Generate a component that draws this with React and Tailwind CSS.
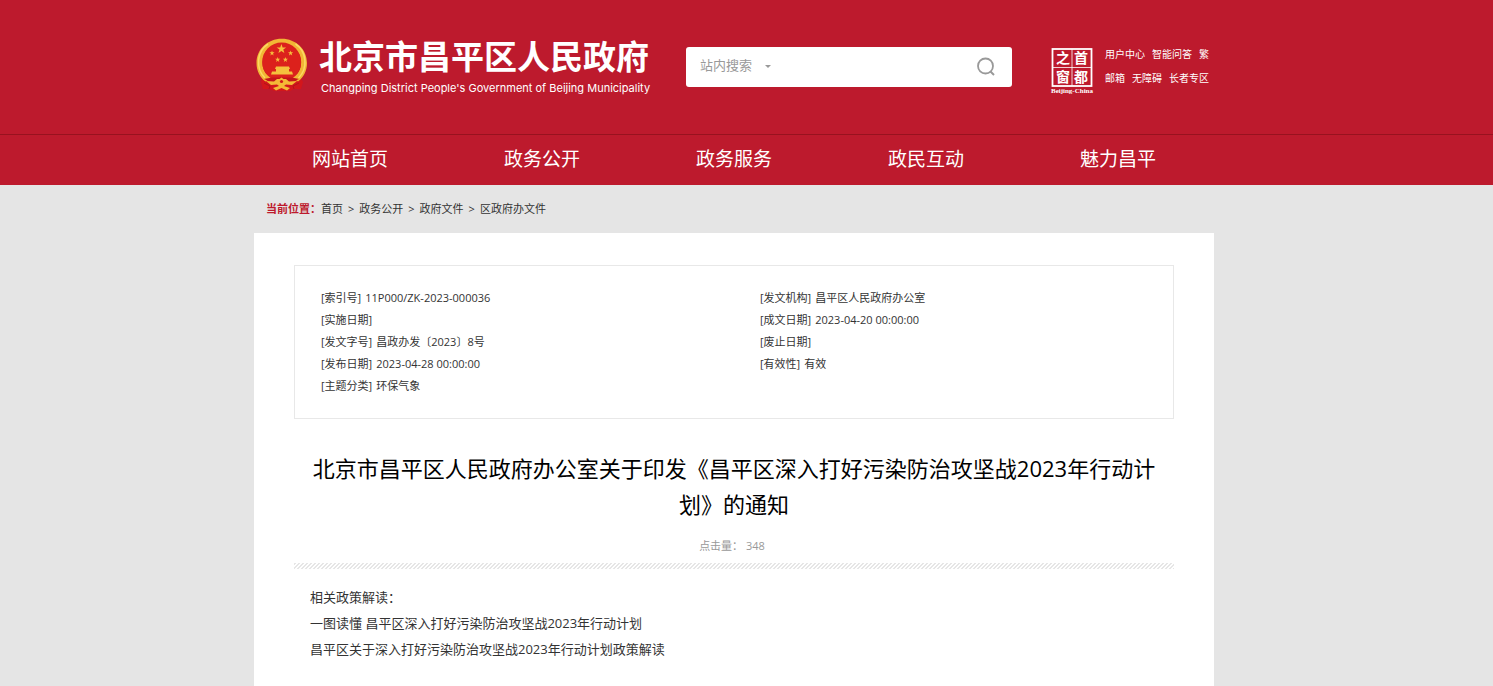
import React from 'react';

const navItems = ['网站首页', '政务公开', '政务服务', '政民互动', '魅力昌平'];

const userLinks = [
  ['用户中心', '智能问答', '繁'],
  ['邮箱', '无障碍', '长者专区'],
];

const crumbs = ['首页', '政务公开', '政府文件', '区政府办文件'];

const metaLeft = [
  { label: '索引号', value: '11P000/ZK-2023-000036' },
  { label: '实施日期', value: '' },
  { label: '发文字号', value: '昌政办发〔2023〕8号' },
  { label: '发布日期', value: '2023-04-28 00:00:00' },
  { label: '主题分类', value: '环保气象' },
];

const metaRight = [
  { label: '发文机构', value: '昌平区人民政府办公室' },
  { label: '成文日期', value: '2023-04-20 00:00:00' },
  { label: '废止日期', value: '' },
  { label: '有效性', value: '有效' },
];

const relatedLinks = [
  '一图读懂 昌平区深入打好污染防治攻坚战2023年行动计划',
  '昌平区关于深入打好污染防治攻坚战2023年行动计划政策解读',
];

const STAR = 'M0 -1 L0.24 -0.31 L0.95 -0.31 L0.38 0.12 L0.59 0.81 L0 0.4 L-0.59 0.81 L-0.38 0.12 L-0.95 -0.31 L-0.24 -0.31 Z';

// National emblem
const Emblem = () => (
  <svg viewBox="0 0 52 54" className="w-[52px] h-[54px] mb-1 shrink-0" aria-hidden="true">
    <path d="M8 37 L5 44 L7 51 L14 51 L18 53 H34 L38 51 L45 51 L47 44 L43 37 Z" fill="#d3161b" />
    <path
      d="M25.7 0.8 C40 0.8 51 11.5 51 25 C51 33 47.5 39.5 42 43.5 L36 39.5 C42.5 36.5 45 31 45 24.5 C45 13.5 36.5 6 25.7 6 C15 6 6.5 13.5 6.5 24.5 C6.5 31 9 36.5 15.5 39.5 L9.5 43.5 C4 39.5 0.5 33 0.5 25 C0.5 11.5 11.5 0.8 25.7 0.8 Z"
      fill="#f2b635"
    />
    <path d="M9 40 C-1 30 1 13 12 6 M42.5 40 C52.5 30 50.5 13 39.5 6" fill="none" stroke="#fbd964" strokeWidth="1.5" />
    <ellipse cx="25.7" cy="24" rx="19.5" ry="19.5" fill="#dc211c" />
    <g fill="#f5c03d">
      <path d={STAR} transform="translate(25.4 11) scale(5)" />
      <path d={STAR} transform="translate(16 15.2) scale(2.7)" />
      <path d={STAR} transform="translate(34.6 15.2) scale(2.7)" />
      <path d={STAR} transform="translate(21.7 21.7) scale(2.7)" />
      <path d={STAR} transform="translate(29.4 21.7) scale(2.7)" />
      <path d="M20 28.5 H33 L34 31 H19 Z" />
      <path d="M20 31 H33 V33.5 H36 L37 36.5 H15 L16 33.5 H20 Z" />
    </g>
    <path d="M8 41 L16 39.5 H36 L43 41 L36 44 L25.5 46 L15 44 Z" fill="#c3151a" />
    <path
      d="M10 43 L18 43.5 L21 41 H23.5 L25.5 39.5 L27.5 41 H30 L33 43.5 L41 43 L36 47 L30 46.5 L28 48 L34 50 L31 52.5 L25.5 50 L20 52.5 L17 50 L23 48 L21 46.5 L15 47 Z"
      fill="#f4b936"
    />
    <circle cx="25.5" cy="43.5" r="1.6" fill="#d3161b" />
    <path d="M8 45 L14 48 L13 51 M43 45 L37 48 L38 51" fill="none" stroke="#b3121a" strokeWidth="1" />
  </svg>
);

// Capital portal seal
const Seal = () => (
  <svg viewBox="0 0 44 54" className="w-[44px] h-[54px] shrink-0" role="img" aria-label="首都之窗">
    <rect x="2.5" y="9" width="39" height="37" fill="none" stroke="#fff" strokeWidth="1.8" />
    <path d="M22 9 V46 M2.5 27.5 H41.5" stroke="#fff" strokeWidth="1" strokeOpacity="0.8" />
    <g
      className="font-['Noto_Sans_CJK_SC',sans-serif] font-bold"
      fill="#fff"
      fontSize="14"
      textAnchor="middle"
    >
      <text x="13" y="23">之</text>
      <text x="31" y="23">首</text>
      <text x="13" y="42">窗</text>
      <text x="31" y="42">都</text>
    </g>
    <text
      x="22"
      y="53"
      className="font-['Liberation_Serif',serif] font-bold"
      fill="#fff"
      fontSize="7"
      textAnchor="middle"
    >
      Beijing-China
    </text>
  </svg>
);

const SearchBox = () => (
  <form className="flex items-center w-[326px] h-10 pl-3.5 pr-4 bg-white rounded-[3px] text-[13px] text-[#999]">
    <select
      aria-label="搜索范围"
      defaultValue="站内搜索"
      className="w-[58px] pb-0.5 appearance-none bg-transparent outline-none"
    >
      <option>站内搜索</option>
    </select>
    <svg viewBox="0 0 6 3" className="w-1.5 h-[3px] ml-[7px] mb-0.5" aria-hidden="true">
      <path d="M0 0 H6 L3 3 Z" fill="#999" />
    </svg>
    <input type="text" aria-label="搜索" className="flex-1 min-w-0 h-8 px-3 outline-none" />
    <button type="button" aria-label="搜索">
      <svg viewBox="0 0 20 20" className="w-5 h-5" fill="none" stroke="#999" aria-hidden="true">
        <circle cx="9.5" cy="9" r="7.5" strokeWidth="1.8" />
        <path d="M14.5 14.5 L18 18" strokeWidth="2" />
      </svg>
    </button>
  </form>
);

const MetaList = ({ items }) => (
  <dl className="px-[26px]">
    {items.map((item) => (
      <div key={item.label} className="flex gap-1">
        <dt>[{item.label}]</dt>
        <dd>{item.value}</dd>
      </div>
    ))}
  </dl>
);

const App = () => {
  return (
    <div className="min-h-screen bg-[#e5e5e5] font-['Open_Sans','Noto_Sans_CJK_SC',sans-serif] text-[#333]">
      <header className="bg-[#bd1a2d] text-white">
        <div className="pr-[25px]">
          <div className="max-w-[960px] h-[134px] mx-auto pl-0.5 flex items-center">
            <Emblem />
            <div className="ml-[11px] pt-0.5 w-[331px] whitespace-nowrap">
              <h1 className="text-[33px] leading-10 font-bold">北京市昌平区人民政府</h1>
              <p className="pl-0.5 font-['Inter','Liberation_Sans',sans-serif] text-[11px] leading-[22px]">
                Changping District People's Government of Beijing Municipality
              </p>
            </div>
            <div className="ml-9">
              <SearchBox />
            </div>
            <div className="ml-[38px] flex items-center gap-[11px]">
              <Seal />
              <div className="pb-0.5 text-[10px] leading-6 whitespace-nowrap">
                {userLinks.map((row) => (
                  <div key={row[0]} className="flex gap-[7px]">
                    {row.map((text) => (
                      <a key={text} href="#">{text}</a>
                    ))}
                  </div>
                ))}
              </div>
            </div>
          </div>
        </div>
        <nav className="border-t border-[#98121f] pr-[25px]">
          <ul className="max-w-[960px] mx-auto pb-0.5 grid grid-cols-5 text-center text-[19px] leading-[48px]">
            {navItems.map((item) => (
              <li key={item}>
                <a href="#">{item}</a>
              </li>
            ))}
          </ul>
        </nav>
      </header>

      <div className="pr-[25px]">
        <div className="max-w-[960px] mx-auto">
          <div className="flex pl-3 text-[11px] leading-[48px]">
            <span className="font-bold text-[#bd1a2d]">当前位置：</span>
            <ol className="flex">
              {crumbs.map((crumb, i) => (
                <li key={crumb}>
                  {i > 0 && <span className="px-[5px]">&gt;</span>}
                  <a href="#">{crumb}</a>
                </li>
              ))}
            </ol>
          </div>

          <main className="min-h-[453px] px-10 pt-8 pb-6 bg-white">
            <div className="grid grid-cols-2 border border-[#e8e8e8] pt-[21px] pb-[21px] text-[11px] leading-[22px]">
              <MetaList items={metaLeft} />
              <MetaList items={metaRight} />
            </div>

            <h2 className="mt-[31px] px-2.5 text-center text-[22px] leading-9 text-black">
              北京市昌平区人民政府办公室关于印发《昌平区深入打好污染防治攻坚战2023年行动计划》的通知
            </h2>
            <p className="mt-[13px] mb-1.5 pr-1 text-center text-[11px] leading-[22px] text-[#999]">
              点击量： <span>348</span>
            </p>
            <div className="h-1.5 bg-[linear-gradient(135deg,#e6e6e6_0%,#e6e6e6_25%,#fff_25%,#fff_50%,#e6e6e6_50%,#e6e6e6_75%,#fff_75%)] bg-[length:4px_4px]" />

            <section className="mt-[15px] px-4 text-[13px] leading-[26px]">
              <p>相关政策解读：</p>
              {relatedLinks.map((text) => (
                <p key={text}>
                  <a href="#">{text}</a>
                </p>
              ))}
            </section>
          </main>
        </div>
      </div>
    </div>
  );
};

export default App;
